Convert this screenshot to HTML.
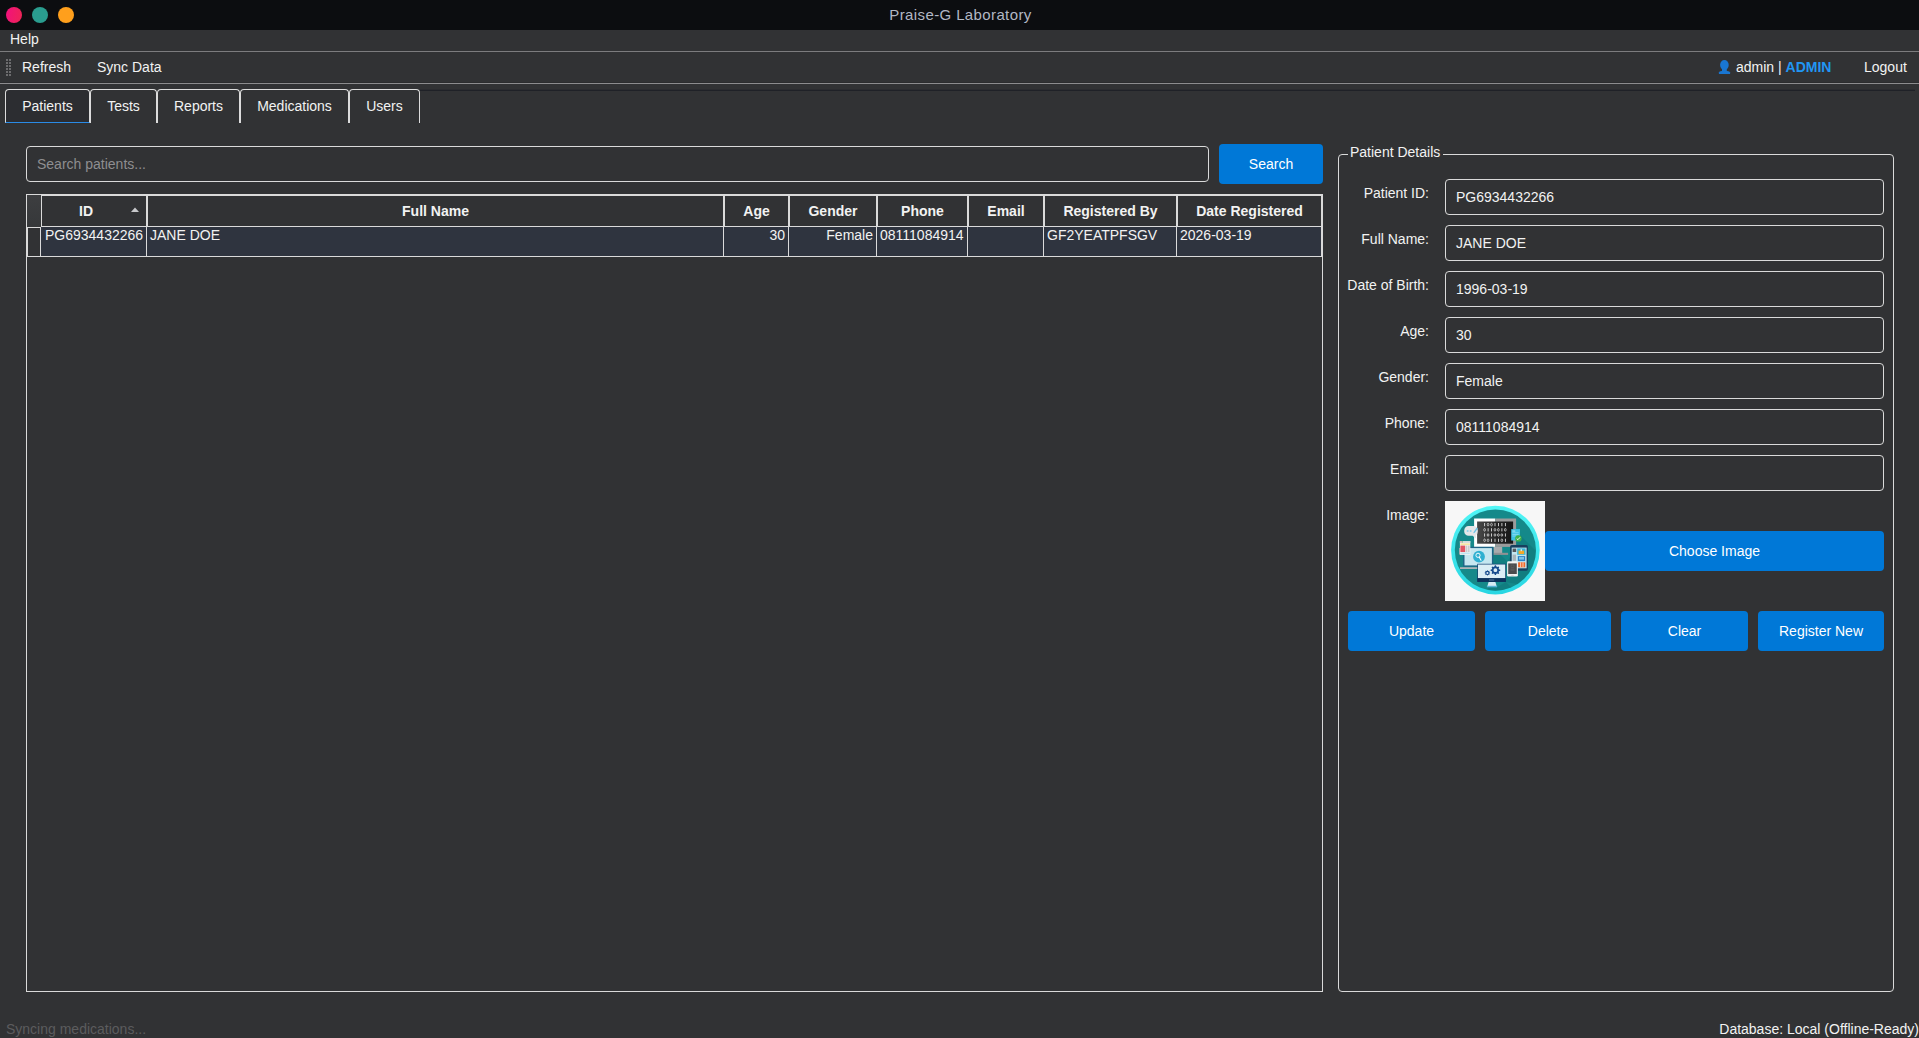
<!DOCTYPE html>
<html><head><meta charset="utf-8"><title>Praise-G Laboratory</title>
<style>
*{box-sizing:border-box;margin:0;padding:0}
html,body{width:1919px;height:1038px;overflow:hidden;background:#313234}
body{font-family:"Liberation Sans",sans-serif;font-size:14px;color:#f2f2f2;position:relative}
.a{position:absolute;white-space:nowrap}
.t{position:absolute;white-space:nowrap;line-height:16px;height:16px}
#titlebar{left:0;top:0;width:1919px;height:30px;background:#0c0d10}
.dot{position:absolute;width:16px;height:16px;border-radius:50%;top:7px}
.hline{position:absolute;left:0;width:1919px;height:1px}
.tab{position:absolute;top:89px;height:34px;border:1px solid #dcdcdc;border-bottom:none;border-radius:4px 4px 0 0;text-align:center;line-height:32px}
.tab.sel{background:#2c2d31;border-bottom:1px solid #2a8be6;height:34px;line-height:32px}
.inp{position:absolute;left:1445px;width:439px;height:36px;border:1px solid #dadada;border-radius:4px;padding-left:10px;line-height:35px}
.lbl{position:absolute;right:490px;text-align:right;line-height:16px;height:16px;white-space:nowrap}
.btn{position:absolute;background:#0078d7;border-radius:4px;text-align:center;color:#fff;height:40px;line-height:40px}
.hc{position:absolute;top:195px;height:32px;border:1px solid #dadada;font-weight:bold;text-align:center;line-height:30px;background:#313234}
.dc{position:absolute;top:227px;height:30px;border-right:1px solid #dadada;border-bottom:1px solid #dadada;background:#2f343f;line-height:16px;padding:0 3px}
</style></head><body>
<div id="titlebar" class="a">
  <div class="dot" style="left:6px;background:linear-gradient(100deg,#f2107e,#ee2654)"></div>
  <div class="dot" style="left:32px;background:#2a9d8f"></div>
  <div class="dot" style="left:58px;background:#ff9f1c"></div>
  <div class="t" id="title" style="left:1px;width:1919px;text-align:center;top:7px;font-size:15px;letter-spacing:0.38px;color:#b2b7c4">Praise-G Laboratory</div>
</div>
<div class="t" style="left:10px;top:31px">Help</div>
<div class="hline" style="top:51px;background:#7c7c7e"></div>
<svg class="a" style="left:6px;top:59px" width="6" height="18"><g fill="#6c6c6e"><rect x="0" y="0" width="2" height="2"/><rect x="3" y="0" width="2" height="2"/><rect x="0" y="3" width="2" height="2"/><rect x="3" y="3" width="2" height="2"/><rect x="0" y="6" width="2" height="2"/><rect x="3" y="6" width="2" height="2"/><rect x="0" y="9" width="2" height="2"/><rect x="3" y="9" width="2" height="2"/><rect x="0" y="12" width="2" height="2"/><rect x="3" y="12" width="2" height="2"/><rect x="0" y="15" width="2" height="2"/><rect x="3" y="15" width="2" height="2"/></g></svg>
<div class="t" style="left:22px;top:59px">Refresh</div>
<div class="t" style="left:97px;top:59px">Sync Data</div>
<svg class="a" style="left:1718px;top:59px" width="14" height="16" viewBox="0 0 14 16"><g fill="#1976d2"><ellipse cx="6.4" cy="6" rx="4.3" ry="5"/><rect x="4" y="9" width="4.8" height="4"/><path d="M0.9 14.9 L0.9 13.6 Q1 12 3.6 11.9 L9.2 11.9 Q12 12 12.1 13.6 L12.1 14.9 Z"/></g></svg>
<div class="t" style="left:1736px;top:59px">admin | <span style="color:#2196f3;font-weight:bold">ADMIN</span></div>
<div class="t" style="left:1864px;top:59px">Logout</div>
<div class="hline" style="top:82px;background:#2b2c2e"></div>
<div class="hline" style="top:83px;background:#8c8c8e"></div>
<div class="hline" style="top:89px;left:420px;width:1495px;background:#2b2c30"></div><div class="hline" style="top:90px;left:420px;width:1495px;background:#1f2127"></div>
<div class="tab sel" style="left:5px;width:85px">Patients</div>
<div class="tab" style="left:90px;width:67px">Tests</div>
<div class="tab" style="left:157px;width:83px">Reports</div>
<div class="tab" style="left:240px;width:109px">Medications</div>
<div class="tab" style="left:349px;width:71px">Users</div>

<div class="a" style="left:26px;top:146px;width:1183px;height:36px;border:1px solid #dadada;border-radius:4px;padding-left:10px;line-height:35px;color:#8e8e90">Search patients...</div>
<div class="btn" style="left:1219px;top:144px;width:104px">Search</div>

<div class="a" id="table" style="left:26px;top:194px;width:1297px;height:798px;border:1px solid #dadada"></div>
<div class="a" style="left:27px;top:195px;width:14px;height:32px;background:linear-gradient(180deg,#3d3e40,#36383a)"></div>
<div class="hc" style="left:41px;width:106px;padding-right:16px">ID</div>
<div class="hc" style="left:147px;width:577px">Full Name</div>
<div class="hc" style="left:724px;width:65px">Age</div>
<div class="hc" style="left:789px;width:88px">Gender</div>
<div class="hc" style="left:877px;width:91px">Phone</div>
<div class="hc" style="left:968px;width:76px">Email</div>
<div class="hc" style="left:1044px;width:133px">Registered By</div>
<div class="hc" style="left:1177px;width:145px">Date Registered</div>
<svg class="a" style="left:130px;top:206px" width="10" height="7"><path d="M1 6 L9 6 L5 1.5 Z" fill="#c8c9cb"/></svg>
<div class="a" style="left:27px;top:227px;width:14px;height:30px;border:1px solid #dadada;background:#313234"></div>
<div class="dc" style="left:41px;width:106px;padding-left:4px">PG6934432266</div>
<div class="dc" style="left:147px;width:577px">JANE DOE</div>
<div class="dc" style="left:724px;width:65px;text-align:right">30</div>
<div class="dc" style="left:789px;width:88px;text-align:right">Female</div>
<div class="dc" style="left:877px;width:91px">08111084914</div>
<div class="dc" style="left:968px;width:76px"></div>
<div class="dc" style="left:1044px;width:133px">GF2YEATPFSGV</div>
<div class="dc" style="left:1177px;width:145px">2026-03-19</div>

<div class="a" id="group" style="left:1338px;top:154px;width:556px;height:838px;border:1px solid #dadada;border-radius:4px"></div>
<div class="t" style="left:1348px;top:144px;background:#313234;padding:0 3px 0 2px">Patient Details</div>

<div class="lbl" style="top:185px">Patient ID:</div><div class="inp" style="top:179px">PG6934432266</div>
<div class="lbl" style="top:231px">Full Name:</div><div class="inp" style="top:225px">JANE DOE</div>
<div class="lbl" style="top:277px">Date of Birth:</div><div class="inp" style="top:271px">1996-03-19</div>
<div class="lbl" style="top:323px">Age:</div><div class="inp" style="top:317px">30</div>
<div class="lbl" style="top:369px">Gender:</div><div class="inp" style="top:363px">Female</div>
<div class="lbl" style="top:415px">Phone:</div><div class="inp" style="top:409px">08111084914</div>
<div class="lbl" style="top:461px">Email:</div><div class="inp" style="top:455px"></div>
<div class="lbl" style="top:507px">Image:</div>
<svg class="a" id="img" style="left:1445px;top:501px" width="100" height="100" viewBox="0 0 100 100">
<defs><linearGradient id="ring" x1="0" y1="0" x2="0" y2="1"><stop offset="0" stop-color="#52f6f6"/><stop offset="1" stop-color="#28d6e2"/></linearGradient>
<linearGradient id="scr" x1="0" y1="0" x2="1" y2="0"><stop offset="0" stop-color="#4a4a4a"/><stop offset="0.5" stop-color="#262626"/><stop offset="1" stop-color="#161616"/></linearGradient>
<clipPath id="cc"><circle cx="50.4" cy="49.1" r="40.6"/></clipPath></defs>
<rect width="100" height="100" fill="#f7f7f7"/>
<circle cx="50.4" cy="49.1" r="44.3" fill="url(#ring)"/>
<circle cx="50.4" cy="49.1" r="40.6" fill="#15898a"/>
<g clip-path="url(#cc)" fill="#0d6f70" opacity="0.4">
<polygon points="71.1,30 110,69 110,90 60.9,80.9 60.9,62.8 71.1,45.9"/>
<polygon points="48,46.4 62,60 62,70 48,68"/>
<polygon points="60.9,80.9 85,105 60,105 42,86.2 52,86.2"/>
<polygon points="83,44.3 110,71 110,96 83,69.2"/>
</g>
<!-- big monitor -->
<rect x="29.1" y="17.5" width="21.1" height="28.4" fill="#ffffff"/>
<rect x="50.2" y="17.5" width="20.9" height="28.4" fill="#9b9b9b"/>
<rect x="32.1" y="20.5" width="36" height="22.2" fill="url(#scr)"/>
<rect x="39.25" y="22.00" width="0.8" height="3.2" fill="#f0f0f0"/><ellipse cx="43.05" cy="23.60" rx="0.85" ry="1.35" fill="none" stroke="#ececec" stroke-width="0.65"/><ellipse cx="46.50" cy="23.60" rx="0.85" ry="1.35" fill="none" stroke="#ececec" stroke-width="0.65"/><rect x="49.60" y="22.00" width="0.8" height="3.2" fill="#f0f0f0"/><rect x="53.05" y="22.00" width="0.8" height="3.2" fill="#f0f0f0"/><rect x="56.50" y="22.00" width="0.8" height="3.2" fill="#f0f0f0"/><rect x="59.95" y="22.00" width="0.8" height="3.2" fill="#f0f0f0"/><ellipse cx="39.60" cy="28.80" rx="0.85" ry="1.35" fill="none" stroke="#ececec" stroke-width="0.65"/><rect x="42.70" y="27.20" width="0.8" height="3.2" fill="#f0f0f0"/><rect x="46.15" y="27.20" width="0.8" height="3.2" fill="#f0f0f0"/><ellipse cx="49.95" cy="28.80" rx="0.85" ry="1.35" fill="none" stroke="#ececec" stroke-width="0.65"/><ellipse cx="53.40" cy="28.80" rx="0.85" ry="1.35" fill="none" stroke="#ececec" stroke-width="0.65"/><rect x="56.50" y="27.20" width="0.8" height="3.2" fill="#f0f0f0"/><ellipse cx="60.30" cy="28.80" rx="0.85" ry="1.35" fill="none" stroke="#ececec" stroke-width="0.65"/><rect x="39.25" y="32.40" width="0.8" height="3.2" fill="#f0f0f0"/><ellipse cx="43.05" cy="34.00" rx="0.85" ry="1.35" fill="none" stroke="#ececec" stroke-width="0.65"/><rect x="46.15" y="32.40" width="0.8" height="3.2" fill="#f0f0f0"/><ellipse cx="49.95" cy="34.00" rx="0.85" ry="1.35" fill="none" stroke="#ececec" stroke-width="0.65"/><ellipse cx="53.40" cy="34.00" rx="0.85" ry="1.35" fill="none" stroke="#ececec" stroke-width="0.65"/><ellipse cx="56.85" cy="34.00" rx="0.85" ry="1.35" fill="none" stroke="#ececec" stroke-width="0.65"/><rect x="59.95" y="32.40" width="0.8" height="3.2" fill="#f0f0f0"/><ellipse cx="39.60" cy="39.30" rx="0.85" ry="1.35" fill="none" stroke="#ececec" stroke-width="0.65"/><ellipse cx="43.05" cy="39.30" rx="0.85" ry="1.35" fill="none" stroke="#ececec" stroke-width="0.65"/><rect x="46.15" y="37.70" width="0.8" height="3.2" fill="#f0f0f0"/><rect x="49.60" y="37.70" width="0.8" height="3.2" fill="#f0f0f0"/><rect x="53.05" y="37.70" width="0.8" height="3.2" fill="#f0f0f0"/><ellipse cx="56.85" cy="39.30" rx="0.85" ry="1.35" fill="none" stroke="#ececec" stroke-width="0.65"/><rect x="59.95" y="37.70" width="0.8" height="3.2" fill="#f0f0f0"/>
<rect x="48.6" y="45.9" width="8.6" height="6.2" fill="#a9abad"/>
<rect x="48.5" y="51.8" width="14.6" height="2.1" fill="#8f9193"/>
<!-- speech bubble -->
<path d="M23.6 25 h4.8 a4.4 4.4 0 0 1 4.4 4.4 v1 a4.4 4.4 0 0 1 -2 3.7 l0.4 3.6 l-3.6 -2.9 h-4 a4.4 4.4 0 0 1 -4.4 -4.4 v-1 a4.4 4.4 0 0 1 4.4 -4.4 Z" fill="#e4e7e9"/>
<rect x="21.8" y="29.2" width="1.7" height="1.6" fill="#7fcfec"/><rect x="24.8" y="29.2" width="1.7" height="1.6" fill="#7fcfec"/>
<path d="M28.6 31 L31.8 26.6 L32.9 27.4 L29.7 31.8 L28.3 32.3 Z" fill="#69c1e6"/>
<!-- doc -->
<rect x="66.2" y="28.1" width="8.8" height="11.4" fill="#3cc3e3"/>
<rect x="67.3" y="29.6" width="3" height="0.9" fill="#c8eef8"/><rect x="67.3" y="31.4" width="6.4" height="0.8" fill="#8adcf0"/><rect x="67.3" y="33" width="6.4" height="0.8" fill="#8adcf0"/><rect x="67.3" y="34.6" width="4" height="0.8" fill="#8adcf0"/>
<circle cx="73.4" cy="37.4" r="3.2" fill="#3fb34a"/>
<path d="M71.7 37.5 L72.9 38.7 L75.2 36.2" stroke="#fff" stroke-width="0.9" fill="none"/>
<!-- laptop -->
<rect x="18.1" y="45.8" width="30.1" height="19.9" fill="#1f6487"/>
<rect x="19.5" y="47.1" width="27.4" height="17.3" fill="#c6e7f0"/>
<circle cx="34" cy="55.7" r="5.9" fill="#2fb0d1"/>
<circle cx="33" cy="54.3" r="2.1" fill="none" stroke="#fff" stroke-width="0.9"/>
<path d="M34.3 56.2 L36 59.2" stroke="#fff" stroke-width="1.1" stroke-linecap="round"/>
<rect x="15" y="66.2" width="33" height="1.8" fill="#aeb3b7"/>
<!-- red window -->
<rect x="14" y="47" width="1.5" height="6.5" fill="#9aa0a4"/>
<rect x="14.9" y="40.1" width="10.4" height="13.8" fill="#f3f3f3"/>
<rect x="14.9" y="40.1" width="10.4" height="1.7" fill="#d4d6d8"/>
<rect x="15.6" y="40.5" width="0.9" height="0.9" fill="#e0505a"/><rect x="17" y="40.5" width="0.9" height="0.9" fill="#5ab04a"/>
<rect x="15.4" y="42.4" width="9.4" height="1.8" fill="#f6e7a0"/>
<rect x="15.4" y="44.6" width="4.8" height="6.4" fill="#e15764"/>
<rect x="20.8" y="44.6" width="1.6" height="6.4" fill="#c9cccf"/><rect x="23" y="44.6" width="1.6" height="6.4" fill="#c9cccf"/>
<rect x="15.4" y="51.5" width="9.4" height="1.6" fill="#bfe4ef"/>
<!-- tablet -->
<rect x="65.1" y="43.9" width="17.8" height="25.8" rx="1.6" fill="#173f5e"/>
<rect x="66.7" y="46.6" width="14.9" height="20.7" fill="#c3e5f0"/>
<rect x="67.6" y="47.6" width="3.6" height="3.4" fill="#56595c"/>
<rect x="72.2" y="47.4" width="8.3" height="6.4" fill="#36b6d6"/><rect x="73.6" y="49.6" width="5.6" height="3.5" fill="#f6a726"/><rect x="75.6" y="48.2" width="1.4" height="2" fill="#e8e4d8"/>
<rect x="67.6" y="53.6" width="3.4" height="6.2" fill="#aab4ba"/>
<rect x="72.8" y="55.1" width="7.4" height="5" fill="#2d80c6"/><rect x="74" y="56" width="5" height="2.6" fill="#7cc4e8"/>
<rect x="73.1" y="61.3" width="7.1" height="5" fill="#f2682a"/><rect x="75.1" y="61.3" width="1" height="5" fill="#f8d0b8"/><rect x="77.5" y="61.3" width="1" height="5" fill="#f8d0b8"/>
<rect x="67.6" y="61.4" width="3.4" height="4.4" fill="#d8eef5"/>
<!-- phone -->
<rect x="62.1" y="60.2" width="10.8" height="15.4" rx="1.3" fill="#f1f1f1"/>
<rect x="63.2" y="62.4" width="8.6" height="10.6" fill="#4b4b4d"/>
<rect x="66" y="64" width="3" height="2.4" fill="none" stroke="#6a6a6c" stroke-width="0.4"/>
<rect x="65.5" y="67.8" width="4" height="0.6" fill="#6a6a6c"/><rect x="65.5" y="69.4" width="4" height="0.6" fill="#5e5e60"/>
<rect x="66.3" y="74" width="2.4" height="0.7" fill="#cfcfcf"/>
<!-- imac -->
<rect x="32.3" y="62.8" width="28.6" height="18.1" fill="#12406e"/>
<rect x="33" y="63.5" width="27.2" height="13.7" fill="#dceef5"/>
<rect x="32.3" y="77.2" width="28.6" height="3.7" fill="#0e335c"/>
<rect x="44" y="78.5" width="5.2" height="1" fill="#56799e"/>
<polygon points="43.6,80.9 50.4,80.9 51.6,85 42.4,85" fill="#d6ecf5"/>
<rect x="41.9" y="84.8" width="10.2" height="1.5" fill="#58b3d8"/>
<path d="M55.27 68.66 L55.27 69.74 L53.98 70.24 L53.66 70.99 L54.22 72.26 L53.46 73.02 L52.19 72.46 L51.44 72.78 L50.94 74.07 L49.86 74.07 L49.36 72.78 L48.61 72.46 L47.34 73.02 L46.58 72.26 L47.14 70.99 L46.82 70.24 L45.53 69.74 L45.53 68.66 L46.82 68.16 L47.14 67.41 L46.58 66.14 L47.34 65.38 L48.61 65.94 L49.36 65.62 L49.86 64.33 L50.94 64.33 L51.44 65.62 L52.19 65.94 L53.46 65.38 L54.22 66.14 L53.66 67.41 L53.98 68.16 Z M48.50 69.20 a1.9 1.9 0 1 0 3.8 0 a1.9 1.9 0 1 0 -3.8 0 Z" fill="#174b8d" fill-rule="evenodd"/>
<path d="M45.08 71.60 L45.08 72.20 L44.37 72.47 L44.20 72.89 L44.51 73.59 L44.09 74.01 L43.39 73.70 L42.97 73.87 L42.70 74.58 L42.10 74.58 L41.83 73.87 L41.41 73.70 L40.71 74.01 L40.29 73.59 L40.60 72.89 L40.43 72.47 L39.72 72.20 L39.72 71.60 L40.43 71.33 L40.60 70.91 L40.29 70.21 L40.71 69.79 L41.41 70.10 L41.83 69.93 L42.10 69.22 L42.70 69.22 L42.97 69.93 L43.39 70.10 L44.09 69.79 L44.51 70.21 L44.20 70.91 L44.37 71.33 Z M41.40 71.90 a1.0 1.0 0 1 0 2.0 0 a1.0 1.0 0 1 0 -2.0 0 Z" fill="#174b8d" fill-rule="evenodd"/>
</svg>
<div class="btn" style="left:1545px;top:531px;width:339px">Choose Image</div>
<div class="btn" style="left:1348px;top:611px;width:127px">Update</div>
<div class="btn" style="left:1485px;top:611px;width:126px">Delete</div>
<div class="btn" style="left:1621px;top:611px;width:127px">Clear</div>
<div class="btn" style="left:1758px;top:611px;width:126px">Register New</div>

<div class="t" style="left:6px;top:1021px;color:#5c5c5e">Syncing medications...</div>
<div class="t" style="right:0px;top:1021px">Database: Local (Offline-Ready)</div>
</body></html>
